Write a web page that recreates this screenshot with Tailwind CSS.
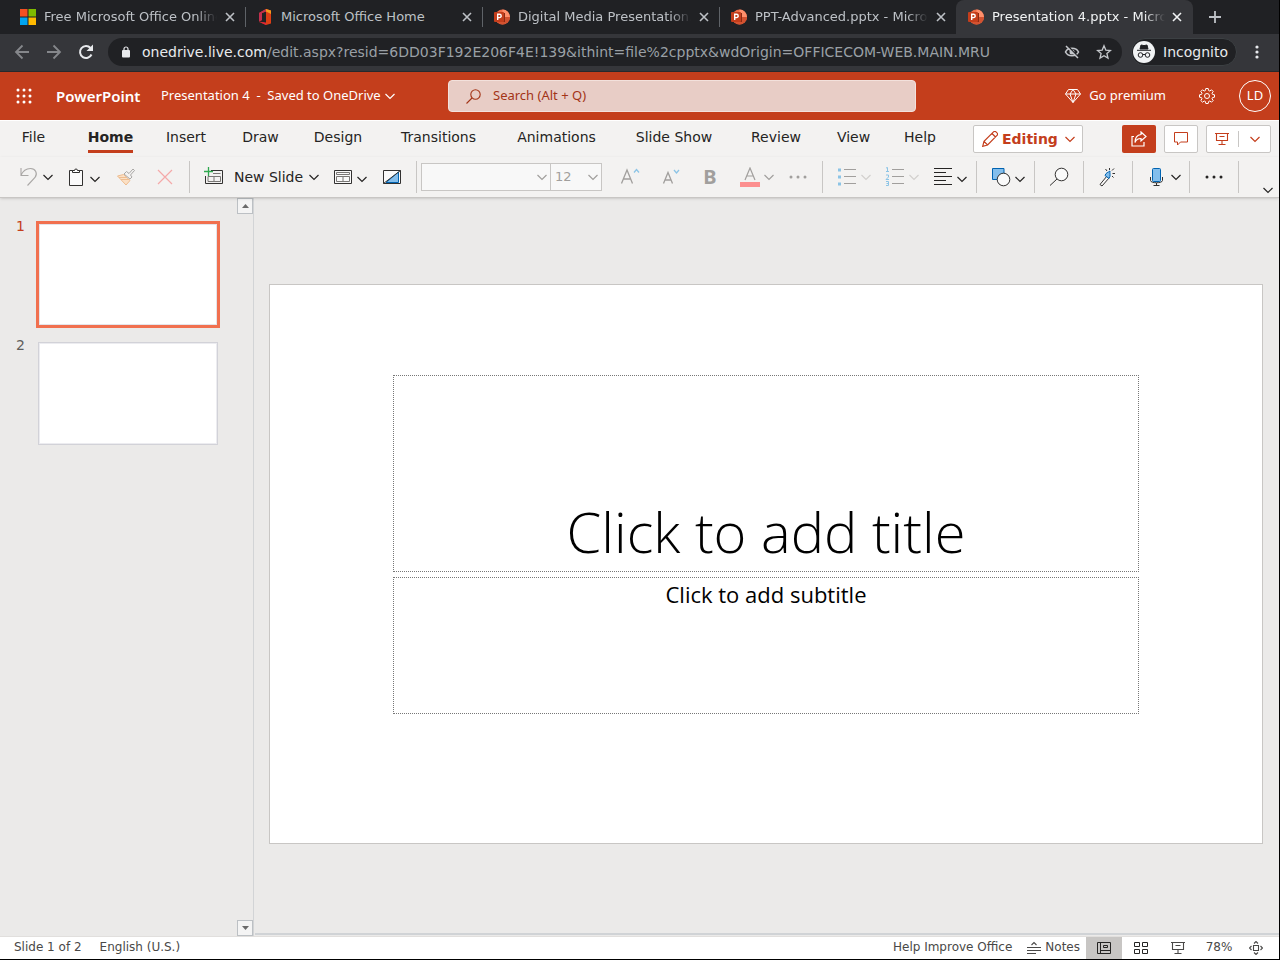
<!DOCTYPE html>
<html lang="en">
<head>
    <meta charset="UTF-8">
    <meta name="viewport" content="width=device-width, initial-scale=1.0">
    <title>Presentation 4.pptx - Microsoft PowerPoint Online</title>
    <script src="https://cdn.jsdelivr.net/npm/@tailwindcss/browser@4"></script>
</head>
<body class="bg-black font-['DejaVu_Sans',sans-serif] text-[#252423]">

    <!-- Shared icons -->
    <svg class="hidden" aria-hidden="true">
        <symbol id="chevron" viewBox="0 0 10 10"><path d="M.5 3 5 7.500 9.500 3" fill="none" stroke="currentColor" stroke-width="1.200"/></symbol>
        <symbol id="close" viewBox="0 0 10 10"><path d="M1 1l8 8M9 1L1 9" fill="none" stroke="currentColor" stroke-width="1.600"/></symbol>
        <symbol id="ppt" viewBox="0 0 16 16">
            <circle cx="8.500" cy="8" r="7.500" fill="#ed6c47"/>
            <path d="M8.500.5A7.500 7.500 0 0 1 16 8H8.500z" fill="#ff8f6b"/>
            <path d="M1 8h15a7.500 7.500 0 0 1-15 0z" fill="#d35230"/>
            <path d="M5 4h6v9H3z" fill="#8a2a14"/>
            <rect y="3" width="10" height="10" rx="1" fill="#c43e1c"/>
            <path d="M3.700 11V5.200h1.800a1.600 1.600 0 0 1 0 3.400H3.700" fill="none" stroke="#fff" stroke-width="1.400"/>
        </symbol>
        <symbol id="present" viewBox="0 0 14 14"><path d="M0 1.500h14M1.500 1.500v7h11v-7M7 8.500v4M3.500 12.500h7M4.500 4.500h5" fill="none" stroke="currentColor" stroke-width="1.100"/></symbol>
        <symbol id="dots" viewBox="0 0 18 4"><g fill="currentColor"><circle cx="2" cy="2" r="1.500"/><circle cx="9" cy="2" r="1.500"/><circle cx="16" cy="2" r="1.500"/></g></symbol>
    </svg>

    <div class="h-screen flex flex-col border-r border-b border-black bg-[#ebeae9] overflow-hidden">

        <!-- Browser tabs -->
        <div class="h-[34px] shrink-0 flex bg-[#202124] text-[13px] text-[#bdc1c6] pl-2">
            <div class="w-[237px] h-full flex items-center pl-3 pr-2">
                <svg class="size-4 shrink-0" viewBox="0 0 16 16"><path d="M0 0h7.500v7.500H0z" fill="#f25022"/><path d="M8.500 0H16v7.500H8.500z" fill="#7fba00"/><path d="M0 8.500h7.500V16H0z" fill="#00a4ef"/><path d="M8.500 8.500H16V16H8.500z" fill="#ffb900"/></svg>
                <span class="ml-2 w-[173px] shrink-0 overflow-hidden whitespace-nowrap mask-r-from-88%">Free Microsoft Office Online</span>
                <button aria-label="Close tab" class="ml-2"><svg class="size-[10px]"><use href="#close"/></svg></button>
            </div>
            <div class="w-[237px] h-full flex items-center pr-2">
                <span class="w-px h-5 bg-[#5f6368] mr-[11px]"></span>
                <svg class="size-4 shrink-0" viewBox="0 0 16 16"><path d="M9 0l5 1.500v13L9 16l-7-3 7 .8V2.500L5 4v7L2 12.500V4z" fill="#dc3e15"/><path d="M2 4l7-4v2.500L5 4v7l-3 1.500z" fill="#c2304f"/><path d="M2 12.500L9 13.800V16z" fill="#e0243b"/><path d="M9 0l5 1.500V5L9 2.500z" fill="#f59a1c"/></svg>
                <span class="ml-2 w-[173px] shrink-0 overflow-hidden whitespace-nowrap">Microsoft Office Home</span>
                <button aria-label="Close tab" class="ml-2"><svg class="size-[10px]"><use href="#close"/></svg></button>
            </div>
            <div class="w-[237px] h-full flex items-center pr-2">
                <span class="w-px h-5 bg-[#5f6368] mr-[11px]"></span>
                <svg class="size-4 shrink-0"><use href="#ppt"/></svg>
                <span class="ml-2 w-[173px] shrink-0 overflow-hidden whitespace-nowrap mask-r-from-88%">Digital Media Presentation.pptx</span>
                <button aria-label="Close tab" class="ml-2"><svg class="size-[10px]"><use href="#close"/></svg></button>
            </div>
            <div class="w-[237px] h-full flex items-center pr-2">
                <span class="w-px h-5 bg-[#5f6368] mr-[11px]"></span>
                <svg class="size-4 shrink-0"><use href="#ppt"/></svg>
                <span class="ml-2 w-[173px] shrink-0 overflow-hidden whitespace-nowrap mask-r-from-88%">PPT-Advanced.pptx - Microsoft</span>
                <button aria-label="Close tab" class="ml-2"><svg class="size-[10px]"><use href="#close"/></svg></button>
            </div>
            <div class="w-[237px] h-full flex items-center pl-3 pr-2 rounded-t-lg bg-[#35363a] text-[#f1f3f4]">
                <svg class="size-4 shrink-0"><use href="#ppt"/></svg>
                <span class="ml-2 w-[173px] shrink-0 overflow-hidden whitespace-nowrap mask-r-from-88%">Presentation 4.pptx - Microsoft</span>
                <button aria-label="Close tab" class="ml-[7px]"><svg class="size-[10px]"><use href="#close"/></svg></button>
            </div>
            <button aria-label="New tab" class="ml-4"><svg class="size-3" viewBox="0 0 12 12"><path d="M6 0v12M0 6h12" stroke="currentColor" stroke-width="1.800"/></svg></button>
        </div>

        <!-- Address bar -->
        <div class="h-[38px] shrink-0 flex items-center bg-[#35363a] border-b border-[#28292c] pb-px pl-[14px] pr-5 text-sm text-[#e8eaed]">
            <button aria-label="Back" class="text-[#85878b]"><svg class="size-4" viewBox="0 0 16 16"><path d="M15 8H2M8.500 1.500L2 8l6.500 6.500" fill="none" stroke="currentColor" stroke-width="1.800"/></svg></button>
            <button aria-label="Forward" class="ml-4 text-[#85878b]"><svg class="size-4" viewBox="0 0 16 16"><path d="M1 8h13M7.500 1.500L14 8l-6.500 6.500" fill="none" stroke="currentColor" stroke-width="1.800"/></svg></button>
            <button aria-label="Reload" class="ml-4"><svg class="size-4" viewBox="0 0 16 16"><path d="M13.500 10.500A6 6 0 1 1 12.500 4" fill="none" stroke="currentColor" stroke-width="2"/><path d="M15 .5v6.500H8.500z" fill="currentColor"/></svg></button>
            <div class="ml-[14px] flex-1 h-7 rounded-full bg-[#202124] flex items-center pl-[14px] pr-[10px]">
                <svg class="w-2 h-3" viewBox="0 0 8 12"><rect y="4" width="8" height="7.500" rx="1" fill="currentColor"/><path d="M2 4.500V3a2 2 0 0 1 4 0v1.500" fill="none" stroke="currentColor" stroke-width="1.200"/></svg>
                <span class="ml-3 flex-1 whitespace-nowrap text-[#9aa0a6]"><span class="text-[#e8eaed]">onedrive.live.com</span>/edit.aspx?resid=6DD03F192E206F4E!139&amp;ithint=file%2cpptx&amp;wdOrigin=OFFICECOM-WEB.MAIN.MRU</span>
                <button aria-label="Cookies blocked" class="text-[#c4c7cb]"><svg class="size-4" viewBox="0 0 16 16"><path d="M1.500 8C4 3 12 3 14.500 8 12 13 4 13 1.500 8z" fill="none" stroke="currentColor" stroke-width="1.600"/><circle cx="8" cy="8" r="2.500" fill="currentColor"/><path d="M3.500 1.500l11 12" stroke="#202124" stroke-width="1.500"/><path d="M2 2l12 12" stroke="currentColor" stroke-width="1.500"/></svg></button>
                <button aria-label="Bookmark" class="ml-4 text-[#c4c7cb]"><svg class="size-4" viewBox="0 0 16 16"><path d="M8 1.800l1.800 4.300 4.700.4-3.600 3 1.100 4.600L8 11.700l-4 2.400 1.100-4.600-3.600-3 4.700-.4z" fill="none" stroke="currentColor" stroke-width="1.300"/></svg></button>
            </div>
            <div class="ml-[9px] h-7 flex items-center gap-2 rounded-full bg-[#202124] border border-[#3c4043] pl-px pr-2">
                <svg class="size-[22px]" viewBox="0 0 22 22"><circle cx="11" cy="11" r="11" fill="#f1f3f4"/><path d="M7 8l1-4 3 .6L14 4l1 4zM4 9.300h14" fill="#202124" stroke="#202124"/><circle cx="7.500" cy="14" r="2.300" fill="none" stroke="#202124"/><circle cx="14.500" cy="14" r="2.300" fill="none" stroke="#202124"/><path d="M10 13.500h2" stroke="#202124"/></svg>
                <span>Incognito</span>
            </div>
            <button aria-label="Browser menu" class="ml-[18px]"><svg class="w-1 h-[14px]" viewBox="0 0 4 14" fill="currentColor"><circle cx="2" cy="2" r="1.600"/><circle cx="2" cy="7" r="1.600"/><circle cx="2" cy="12" r="1.600"/></svg></button>
        </div>

        <!-- App header -->
        <header class="h-12 shrink-0 flex items-center bg-[#c43e1c] text-white font-['Noto_Sans',sans-serif] text-[13px] pl-4 pr-2">
            <button aria-label="App launcher"><svg class="size-4" viewBox="0 0 16 16" fill="currentColor"><circle cx="2" cy="2" r="1.500"/><circle cx="8" cy="2" r="1.500"/><circle cx="14" cy="2" r="1.500"/><circle cx="2" cy="8" r="1.500"/><circle cx="8" cy="8" r="1.500"/><circle cx="14" cy="8" r="1.500"/><circle cx="2" cy="14" r="1.500"/><circle cx="8" cy="14" r="1.500"/><circle cx="14" cy="14" r="1.500"/></svg></button>
            <a href="#" class="ml-6 w-[105px] text-[15px] font-semibold">PowerPoint</a>
            <button class="flex items-center gap-1 whitespace-pre"><span>Presentation 4  -  Saved to OneDrive</span><svg class="size-[10px]"><use href="#chevron"/></svg></button>
            <label class="absolute left-[35%] w-[468px] h-8 flex items-center rounded-sm bg-[#e8cdc6] border border-[#f3e1dc] pl-[17px] text-[#a33417]">
                <svg class="size-[15px]" viewBox="0 0 15 15" fill="none" stroke="currentColor" stroke-width="1.100"><circle cx="9.500" cy="5.500" r="4.700"/><path d="M6 9L.5 14.500"/></svg>
                <input type="text" aria-label="Search" placeholder="Search (Alt + Q)" class="ml-3 flex-1 outline-none placeholder:text-[#a33417]">
            </label>
            <button class="ml-auto flex items-center gap-2">
                <svg class="size-4" viewBox="0 0 16 16" fill="none" stroke="currentColor"><path d="M3.500 1.500h9l3 4.500L8 14.500.5 6zM.5 6h15M5 6l3 8.500L11 6M5 6l3-4.500L11 6"/></svg>
                <span>Go premium</span>
            </button>
            <button aria-label="Settings" class="ml-8"><svg class="size-[18px]" viewBox="0 0 18 18" fill="none" stroke="currentColor"><circle cx="9" cy="9" r="2.500"/><path d="M7.800 1.500h2.400l.4 2 1.200.5 1.700-1.200 1.700 1.700L14 6.200l.5 1.200 2 .4v2.400l-2 .4-.5 1.200 1.200 1.700-1.700 1.700-1.700-1.200-1.200.5-.4 2H7.800l-.4-2-1.200-.5-1.700 1.200-1.700-1.700L4 11.800l-.5-1.200-2-.4V7.800l2-.4L4 6.200 2.800 4.500l1.700-1.700L6.200 4l1.200-.5z"/></svg></button>
            <button class="ml-[23px] size-8 rounded-full border border-white text-[13px]">LD</button>
        </header>

        <!-- Ribbon tabs -->
        <nav class="h-[37px] shrink-0 flex items-center bg-[#f3f2f1] border-t border-white text-sm">
            <button class="w-[67px] h-8 pb-1">File</button>
            <button class="ml-[6px] w-[75px] h-8 pb-1 flex justify-center font-bold"><span class="border-b-3 border-[#c43e1c] h-[30px] pt-1">Home</span></button>
            <button class="w-[76px] h-8 pb-1">Insert</button>
            <button class="w-[73px] h-8 pb-1">Draw</button>
            <button class="w-[82px] h-8 pb-1">Design</button>
            <button class="w-[119px] h-8 pb-1">Transitions</button>
            <button class="w-[117px] h-8 pb-1">Animations</button>
            <button class="w-[118px] h-8 pb-1">Slide Show</button>
            <button class="w-[86px] h-8 pb-1">Review</button>
            <button class="w-[69px] h-8 pb-1">View</button>
            <button class="w-16 h-8 pb-1">Help</button>
            <button class="ml-[21px] w-[110px] h-7 flex items-center pl-2 gap-1 rounded-xs bg-white border border-[#c8c6c4] text-[#c43e1c] font-bold">
                <svg class="size-4 shrink-0" viewBox="0 0 16 16" fill="none" stroke="currentColor" stroke-width="1.200"><path d="M.7 15.300l1.300-5L11.500.9a1.700 1.700 0 0 1 2.500 0l1 1a1.700 1.700 0 0 1 0 2.500L5.600 14zM10 2.500L13.500 6M2 10.300L5.600 14"/></svg>
                <span>Editing</span>
                <svg class="size-[10px] ml-[3px]"><use href="#chevron"/></svg>
            </button>
            <div class="ml-auto mr-2 flex gap-2 text-[#c43e1c]">
                <button aria-label="Share" class="w-[34px] h-7 flex items-center justify-center rounded-xs bg-[#c43e1c] text-white"><svg class="size-4" viewBox="0 0 16 16" fill="none" stroke="currentColor" stroke-width="1.200"><path d="M3 5.500H1v9.500h12v-4M10 1l5 4.500L10 10V7.500c-3 0-5 1-6 4 0-4 2-7.500 6-8z"/></svg></button>
                <button aria-label="Comments" class="w-[34px] h-7 flex items-center justify-center rounded-xs bg-white border border-[#c8c6c4]"><svg class="size-[14px]" viewBox="0 0 14 14" fill="none" stroke="currentColor"><path d="M.5.5h13v9.500H6.500L3.500 13v-3h-3z"/></svg></button>
                <button aria-label="Present" class="w-[65px] h-7 flex items-center rounded-xs bg-white border border-[#c8c6c4] pl-2"><svg class="size-[14px]"><use href="#present"/></svg><span class="ml-[9px] w-px h-4 bg-[#c8c6c4]"></span><svg class="ml-[11px] size-[10px]"><use href="#chevron"/></svg></button>
            </div>
        </nav>

        <!-- Ribbon commands -->
        <div class="relative z-10 h-[41px] shrink-0 flex items-center bg-[#f3f2f1] border-b border-[#c8c6c4] shadow text-sm pl-3">
            <button aria-label="Undo" class="w-[47px] h-8 flex items-center justify-center gap-1"><svg class="size-5 text-[#a9a7a5]" viewBox="0 0 20 20" fill="none" stroke="currentColor" stroke-width="1.100"><path d="M2 1v7.500h7.500M2 8.500C4 3.500 8 1.500 11.500 1.500c5 0 7.500 5 4.500 9L8.500 18.500"/></svg><svg class="size-[10px]"><use href="#chevron"/></svg></button>
            <button aria-label="Paste" class="w-[48px] h-8 flex items-center justify-center gap-1"><svg class="size-5" viewBox="0 0 20 20" fill="none" stroke="#323130"><path d="M3.500 3.500h13v15h-13z" fill="#fafafa"/><path d="M6.500 5.500v-2h2a1.500 1.500 0 0 1 3 0h2v2z" fill="#fff"/></svg><svg class="size-[10px] mt-1"><use href="#chevron"/></svg></button>
            <button aria-label="Format painter" class="w-[37px] h-8 flex items-center justify-center"><svg class="size-5" viewBox="0 0 20 20" fill="none"><path d="M1.500 9l6-1.500 6.500 6-4 4.500z" fill="#fbe0c5" stroke="#eebd90"/><path d="M5 12.500h8.500M3 10.500h8" stroke="#eebd90"/><path d="M8 7l2.500-2.500 2.500 2 4-4.500 1.500 1.500-4 4.500 1.500 2-2 2z" fill="#f3f2f1" stroke="#a9a7a5"/></svg></button>
            <button aria-label="Delete" class="w-[42px] h-8 flex items-center justify-center"><svg class="size-4" viewBox="0 0 16 16" stroke="#f4a9a9" stroke-width="1.200"><path d="M1 1l14 14M15 1L1 15"/></svg></button>
            <span class="ml-[3px] w-px h-8 bg-[#c8c6c4]"></span>
            <button class="ml-[6px] w-[131px] h-8 flex items-center justify-center"><svg class="size-5 shrink-0" viewBox="0 0 20 20" fill="none"><path d="M7 3.500h11.500v13h-17V9" stroke="#323130"/><path d="M9 6.500h7.500M4 9.500h12.500v5H4zM10 9.500v5" stroke="#797775"/><path d="M4.500 0v9M0 4.500h9" stroke="#2fa84f" stroke-width="1.300"/></svg><span class="ml-[10px] mr-[6px] whitespace-nowrap">New Slide</span><svg class="size-[10px] shrink-0"><use href="#chevron"/></svg></button>
            <button aria-label="Layout" class="w-[46px] h-8 flex items-center justify-center gap-1"><svg class="size-5" viewBox="0 0 20 20" fill="none"><path d="M1.500 3.500h17v13h-17z" fill="#fafafa" stroke="#323130"/><path d="M3.500 5.500h13v2h-13zM3.500 9.500h13v5h-13zM10 9.500v5" stroke="#797775"/></svg><svg class="size-[10px] mt-1"><use href="#chevron"/></svg></button>
            <button aria-label="Designer" class="w-[37px] h-8 flex items-center justify-center"><svg class="size-5" viewBox="0 0 20 20" fill="none"><path d="M1.500 3.500h17v13h-17z" fill="#fafafa" stroke="#323130"/><path d="M4 15.500L16.500 5v10.500z" fill="#83beec" stroke="#0063b1"/><path d="M1.500 16.500l17-13" stroke="#323130"/></svg></button>
            <span class="ml-[6px] w-px h-8 bg-[#c8c6c4]"></span>
            <div class="ml-1 flex text-[13px] text-[#a19f9d]">
                <div class="relative"><select aria-label="Font" class="w-[130px] h-7 appearance-none border border-[#c8c6c4] bg-[#f8f8f8]"><option></option></select><svg class="absolute right-1 top-[9px] size-[10px] pointer-events-none"><use href="#chevron"/></svg></div>
                <div class="relative -ml-px"><select aria-label="Font size" class="w-[52px] h-7 appearance-none border border-[#c8c6c4] bg-[#f8f8f8] pl-1"><option>12</option></select><svg class="absolute right-1 top-[9px] size-[10px] pointer-events-none"><use href="#chevron"/></svg></div>
            </div>
            <button aria-label="Grow font" class="w-14 h-8 flex items-center justify-center text-[#a19f9d]"><svg class="size-5" viewBox="0 0 20 20" fill="none" stroke="currentColor" stroke-width="1.300"><path d="M1.500 16.500l5.500-13.500 5.500 13.500M3.500 12h7"/><path d="M14 5.500l2.500-3L19 5.500" stroke="#8cc4e6"/></svg></button>
            <button aria-label="Shrink font" class="w-[26px] h-8 flex items-center justify-center text-[#a19f9d]"><svg class="size-5" viewBox="0 0 20 20" fill="none" stroke="currentColor" stroke-width="1.300"><path d="M2.500 16.500L7 5.500l4.500 11M4 13h6"/><path d="M13 3l2.500 3L18 3" stroke="#8cc4e6"/></svg></button>
            <button class="w-[52px] h-8 text-[20px] leading-8 font-bold text-[#a19f9d] font-['Noto_Sans',sans-serif]">B</button>
            <button aria-label="Font color" class="w-[42px] h-8 flex items-center justify-center gap-1 text-[#a19f9d]"><svg class="size-5" viewBox="0 0 20 20" fill="none" stroke="currentColor" stroke-width="1.200"><path d="M5 13l5-12 5 12M6.500 9h7"/><path d="M0 15h20v5H0z" fill="#fc8f8f" stroke="none"/></svg><svg class="size-[10px]"><use href="#chevron"/></svg></button>
            <button aria-label="More font options" class="w-[39px] h-8 flex items-center justify-center text-[#a19f9d]"><svg class="w-[18px] h-1"><use href="#dots"/></svg></button>
            <span class="ml-[5px] w-px h-8 bg-[#c8c6c4]"></span>
            <button aria-label="Bullets" class="ml-[7px] w-12 h-8 flex items-center justify-center gap-1 text-[#d2d0ce]"><svg class="size-5" viewBox="0 0 20 20"><path d="M1 1.500h3v3H1zM1 8.500h3v3H1zM1 15.500h3v3H1z" fill="#8cc4e6"/><path d="M7 2.500h12M7 9.500h12M7 16.500h12" stroke="#a19f9d"/></svg><svg class="size-[10px]"><use href="#chevron"/></svg></button>
            <button aria-label="Numbering" class="w-12 h-8 flex items-center justify-center gap-1 text-[#d2d0ce]"><svg class="size-5" viewBox="0 0 20 20"><g fill="none" stroke="#8cc4e6"><path d="M1 1l1.500-.5v4M1 4.500h3M1 8h2.500v2L1 12.500h3M1 14.500h2.500v4H1M1.500 16.500h2"/></g><path d="M7 2.500h12M7 9.500h12M7 16.500h12" stroke="#a19f9d"/></svg><svg class="size-[10px]"><use href="#chevron"/></svg></button>
            <button aria-label="Align" class="w-[48px] h-8 flex items-center justify-center gap-1"><svg class="size-5" viewBox="0 0 20 20" stroke="#252423" stroke-width="1.100"><path d="M1 1.500h18M1 5.500h12M1 9.500h18M1 13.500h12M1 17.500h18"/></svg><svg class="size-[10px] mt-1"><use href="#chevron"/></svg></button>
            <span class="ml-[2px] w-px h-8 bg-[#c8c6c4]"></span>
            <button aria-label="Shapes" class="ml-[5px] w-[52px] h-8 flex items-center justify-center gap-1"><svg class="size-5" viewBox="0 0 20 20"><path d="M1.500 1.500h11.500v11H1.500z" fill="#83beec" stroke="#0063b1"/><circle cx="12.500" cy="12.500" r="6.300" fill="#fafafa" stroke="#323130"/></svg><svg class="size-[10px] mt-1"><use href="#chevron"/></svg></button>
            <span class="w-px h-8 bg-[#c8c6c4]"></span>
            <button aria-label="Find" class="w-12 h-8 flex items-center justify-center"><svg class="size-5" viewBox="0 0 20 20" fill="none" stroke="#323130"><circle cx="12.500" cy="7.500" r="6.300" fill="#fafafa"/><path d="M8 12L1 18.500"/></svg></button>
            <span class="w-px h-8 bg-[#c8c6c4]"></span>
            <button aria-label="Designer ideas" class="w-12 h-8 flex items-center justify-center"><svg class="size-5" viewBox="0 0 20 20" fill="none"><path d="M2 17.500L9 9l2 2-7 8z" stroke="#323130" fill="#fafafa"/><path d="M7 8.500c1-3 3-3 5-4.500-.5 2 1 5-1 7.500z" fill="#83beec" stroke="#0063b1"/><path d="M9 4L7.500 2M11.500 1v2M14 3.500L16 1.500M14.500 6.500H17M14 9l1.500 1.500" stroke="#323130"/></svg></button>
            <span class="w-px h-8 bg-[#c8c6c4]"></span>
            <button aria-label="Dictate" class="ml-[6px] w-[50px] h-8 flex items-center justify-center gap-1"><svg class="size-5" viewBox="0 0 20 20" fill="none"><path d="M3.500 10v3.500c0 3 12 3 12 0V10M9.500 16v3M6.500 18.500h6" stroke="#323130"/><rect x="5.500" y="1.500" width="8" height="13" rx="1" fill="#83beec" stroke="#0063b1"/></svg><svg class="size-[10px]"><use href="#chevron"/></svg></button>
            <span class="w-px h-8 bg-[#c8c6c4]"></span>
            <button aria-label="More commands" class="w-12 h-8 flex items-center justify-center"><svg class="w-[18px] h-1"><use href="#dots"/></svg></button>
            <span class="w-px h-8 bg-[#c8c6c4]"></span>
            <button aria-label="Ribbon options" class="ml-auto mr-[6px] self-end mb-[2px]"><svg class="size-[10px]"><use href="#chevron"/></svg></button>
        </div>

        <div class="flex-1 min-h-0 flex">
            <!-- Slide thumbnails -->
            <aside class="w-[254px] shrink-0 flex border-r border-[#d2d4d6] text-sm">
                <ol class="flex-1 flex flex-col gap-3 pt-[23px] pl-4">
                    <li class="flex items-start text-[#c43e1c]"><span class="w-5 -mt-[5px]">1</span><div class="w-[184px] h-[107px] bg-white border-3 border-[#f1704f] inset-ring inset-ring-[#e4e4ea]"></div></li>
                    <li class="flex items-start text-[#605e5c]"><span class="w-5 -mt-[5px]">2</span><div class="m-[2px] w-[180px] h-[103px] bg-white border border-[#d2d2d8] inset-ring inset-ring-[#ececf0]"></div></li>
                </ol>
                <div class="w-4 flex flex-col justify-between text-[#6a6a6a]">
                    <button aria-label="Scroll up" class="size-4 flex items-center justify-center bg-[#f4f4f4] border border-[#bcc0c4]"><svg class="w-[7px] h-1" viewBox="0 0 7 4" fill="currentColor"><path d="M0 4L3.500 0 7 4z"/></svg></button>
                    <button aria-label="Scroll down" class="size-4 flex items-center justify-center bg-[#f4f4f4] border border-[#bcc0c4]"><svg class="w-[7px] h-1" viewBox="0 0 7 4" fill="currentColor"><path d="M0 0h7L3.500 4z"/></svg></button>
                </div>
            </aside>

            <!-- Slide editor -->
            <main class="flex-1 min-w-0 flex flex-col">
                <div class="flex-1 flex items-center pl-[15px] pr-4 pb-1">
                    <section class="w-full aspect-[994/560] bg-white border border-[#c8c6c4] grid grid-rows-[90fr_197fr_5fr_137fr_129fr] px-[12.4%] text-center text-black">
                        <div class="row-start-2 flex flex-col justify-end border border-dotted border-[#777]">
                            <h1 class="pb-[2px] font-['Open_Sans',sans-serif] font-light text-[56px] leading-[76px]">Click to add title</h1>
                        </div>
                        <div class="row-start-4 border border-dotted border-[#777]">
                            <p class="font-['Open_Sans',sans-serif] text-[22px] leading-8">Click to add subtitle</p>
                        </div>
                    </section>
                </div>
                <div class="h-[3px] shrink-0 border-t-2 border-[#d0d3d6] ml-px"></div>
            </main>
        </div>

        <!-- Status bar -->
        <footer class="h-[23px] shrink-0 flex items-center bg-white border-t border-[#e1dfdd] text-xs text-[#494847] pl-[14px] pr-[9px]">
            <button class="pb-[2px]">Slide 1 of 2</button>
            <button class="ml-[18px] pb-[2px]">English (U.S.)</button>
            <button class="ml-auto pb-[2px]">Help Improve Office</button>
            <button class="ml-[15px] mr-[6px] flex items-center gap-1"><svg class="size-[14px]" viewBox="0 0 14 14" fill="none" stroke="currentColor" stroke-width="1.100"><path d="M4.500 4L7 1.500 9.500 4M0 6.500h14M0 9.500h14M0 12.500h9"/></svg><span class="pb-[2px]">Notes</span></button>
            <button aria-label="Normal view" class="w-9 h-full flex items-center justify-center bg-[#c8c6c4]"><svg class="size-[14px]" viewBox="0 0 14 14" fill="none" stroke="#252423"><path d="M.5 1.500h13v11H.5zM3.500 1.500v11M3.500 9.500h10M6.500 4.500h4v2h-4z"/></svg></button>
            <button aria-label="Slide sorter" class="w-[37px] h-full flex items-center justify-center"><svg class="size-[14px]" viewBox="0 0 14 14" fill="none" stroke="#252423"><path d="M.5 1.500h5v4h-5zM8.500 1.500h5v4h-5zM.5 8.500h5v4h-5zM8.500 8.500h5v4h-5z"/></svg></button>
            <button aria-label="Slide show" class="w-[37px] h-full flex items-center justify-center"><svg class="size-[14px]"><use href="#present"/></svg></button>
            <button class="w-[46px] pb-[2px]">78%</button>
            <button aria-label="Fit to window" class="w-7 h-full flex items-center justify-center"><svg class="size-[14px]" viewBox="0 0 14 14" fill="none" stroke="currentColor" stroke-width="1.100"><path d="M4.500 4.500h5v5h-5zM5 2.500l2-2 2 2M5 11.500l2 2 2-2M2.500 5l-2 2 2 2M11.500 5l2 2-2 2"/></svg></button>
        </footer>
    </div>
</body>
</html>
